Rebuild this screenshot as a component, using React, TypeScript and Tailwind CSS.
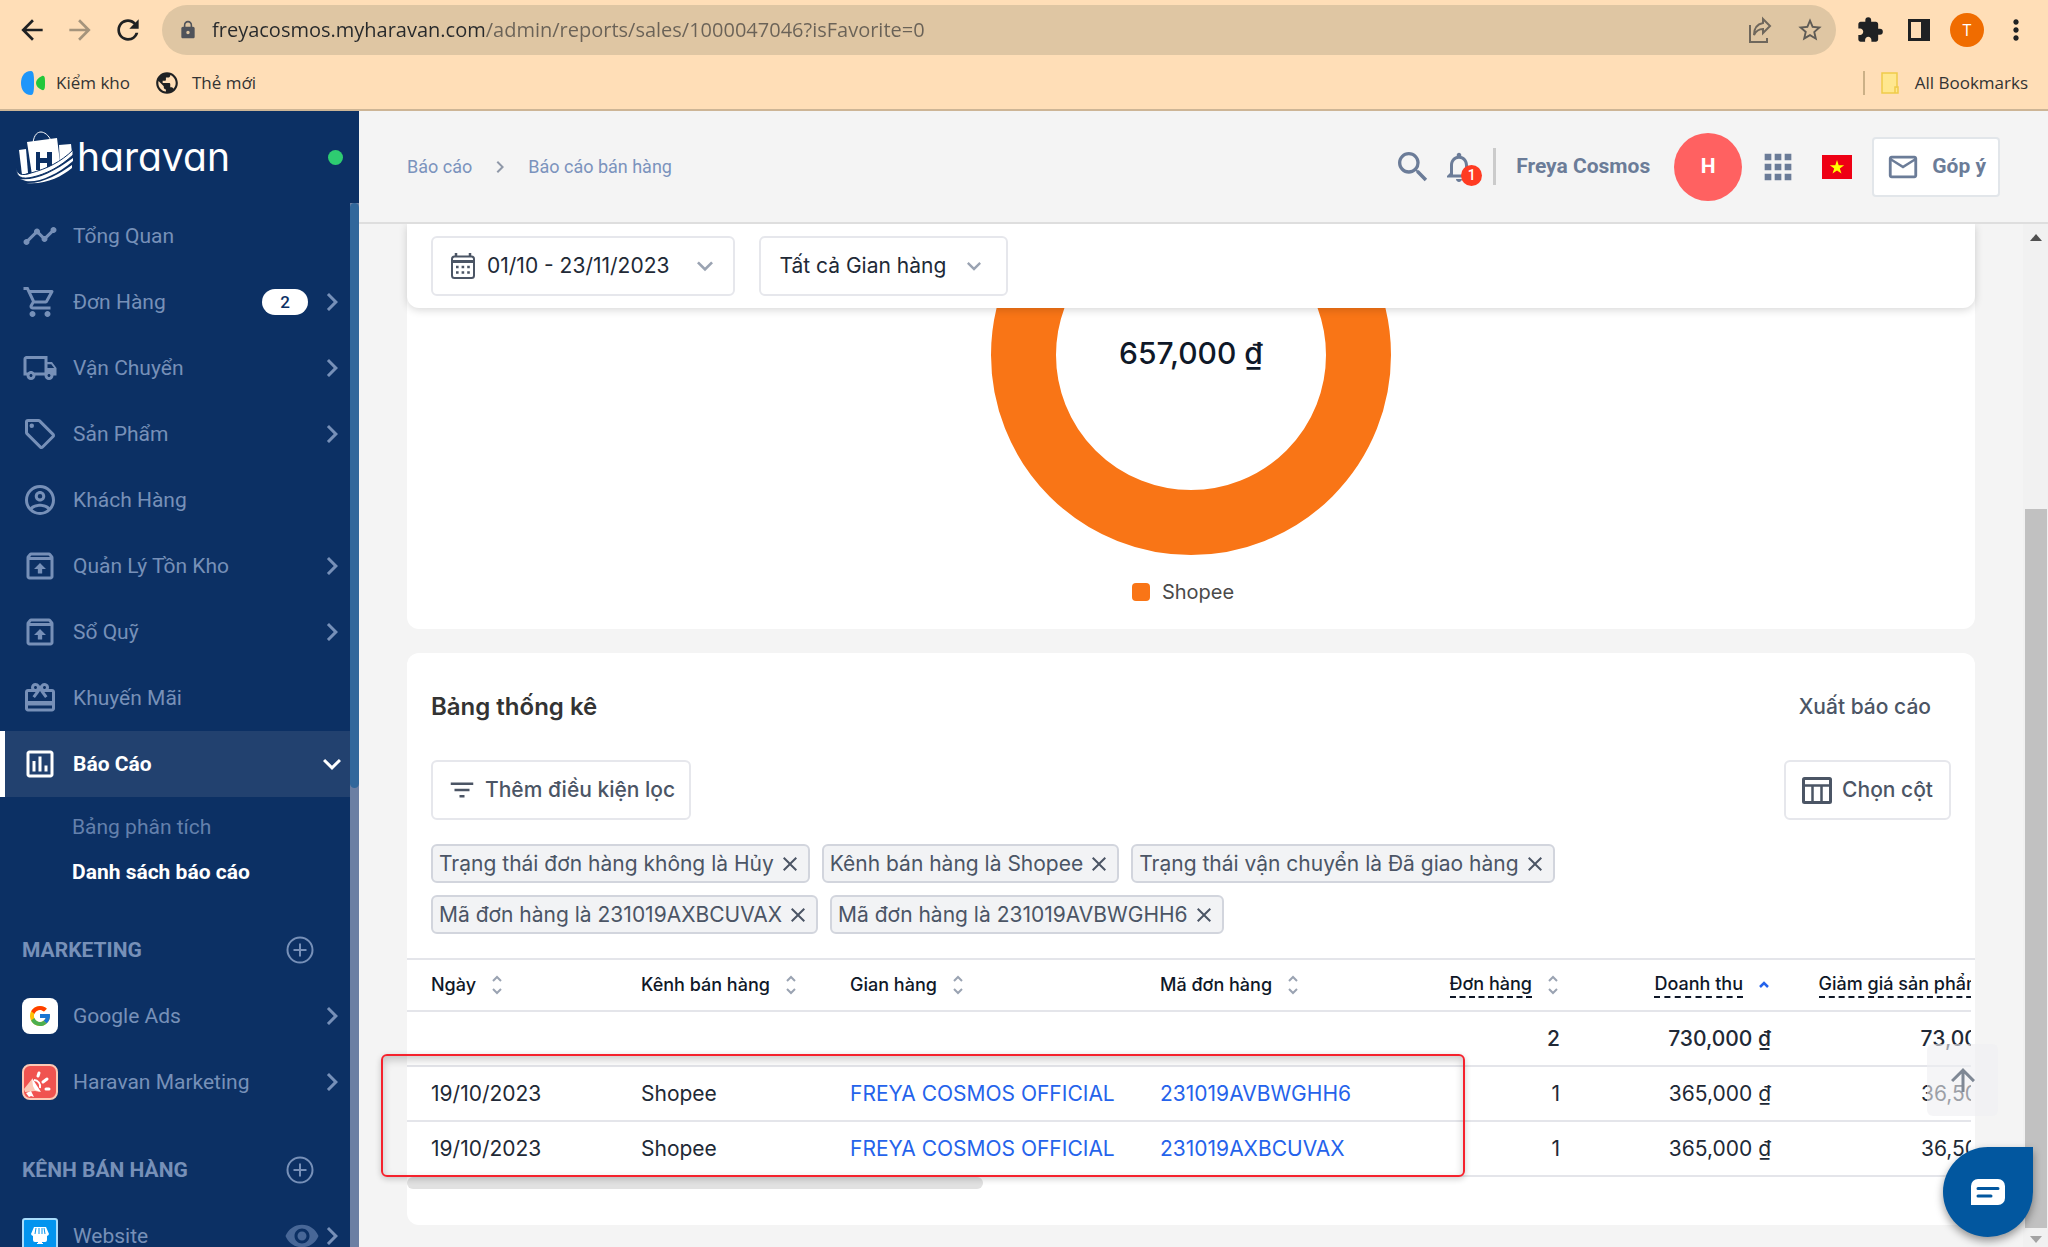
import React, { useState } from 'react';
import {
  MdApps,
  MdArrowBack,
  MdArrowForward,
  MdArrowUpward,
  MdCardGiftcard,
  MdChevronRight,
  MdClose,
  MdExpandMore,
  MdExtension,
  MdFilterList,
  MdLock,
  MdMailOutline,
  MdMoreVert,
  MdNotificationsNone,
  MdOutlineAssessment,
  MdOutlineLocalShipping,
  MdOutlineShoppingCart,
  MdOutlineUnarchive,
  MdPublic,
  MdRefresh,
  MdSearch,
  MdStarBorder,
  MdTimeline,
  MdVisibility,
} from 'react-icons/md';
import { FcGoogle } from 'react-icons/fc';

const TagIcon = ({ className }: { className?: string }) => (
  <svg viewBox="0 0 24 24" fill="currentColor" className={className}>
    <path d="M21.41 11.58L12.41 2.58A2 2 0 0 0 11 2H4A2 2 0 0 0 2 4V11A2 2 0 0 0 2.59 12.42L11.59 21.42A2 2 0 0 0 13 22A2 2 0 0 0 14.41 21.41L21.41 14.41A2 2 0 0 0 22 13A2 2 0 0 0 21.41 11.58M13 20L4 11V4H11L20 13M6.5 5A1.5 1.5 0 1 1 5 6.5A1.5 1.5 0 0 1 6.5 5Z" />
  </svg>
);

const AccountIcon = ({ className }: { className?: string }) => (
  <svg viewBox="0 0 24 24" fill="currentColor" className={className}>
    <path d="M12,2A10,10 0 0,0 2,12A10,10 0 0,0 12,22A10,10 0 0,0 22,12A10,10 0 0,0 12,2M7.07,18.28C7.5,17.38 10.12,16.5 12,16.5C13.88,16.5 16.5,17.38 16.93,18.28C15.57,19.36 13.86,20 12,20C10.14,20 8.43,19.36 7.07,18.28M18.36,16.83C16.93,15.09 13.46,14.5 12,14.5C10.54,14.5 7.07,15.09 5.64,16.83C4.62,15.5 4,13.82 4,12C4,7.59 7.59,4 12,4C16.41,4 20,7.59 20,12C20,13.82 19.38,15.5 18.36,16.83M12,6C10.06,6 8.5,7.56 8.5,9.5C8.5,11.44 10.06,13 12,13C13.94,13 15.5,11.44 15.5,9.5C15.5,7.56 13.94,6 12,6M12,11A1.5,1.5 0 0,1 10.5,9.5A1.5,1.5 0 0,1 12,8A1.5,1.5 0 0,1 13.5,9.5A1.5,1.5 0 0,1 12,11Z" />
  </svg>
);

const LogoMark = () => (
  <svg viewBox="0 0 57 53" className="w-[57px] h-[53px]" fill="#fff">
    <path d="M3 19l7-1 2 24-6 2z" />
    <path d="M11 11l30-4 3 24c-8 7-18 11-28 13z" />
    <path d="M43 14l12-1 1 9c-4 5-8 9-12 12z" />
    <path d="M17 12C18 3 22 1 25 1s8 3 10 9" fill="none" stroke="#fff" strokeWidth="1" />
    <path d="M20 21h4v6h7v-6h5v18h-5v-7h-7v7h-4z" fill="#0c3064" />
    <path d="M1 36c-1 8 6 9 14 6C30 38 45 31 57 19v5C44 36 30 43 17 46 6 49-1 46 1 36z" stroke="#0c3064" strokeWidth="1" />
    <path d="M4 48c15 2 34-7 53-21v3C41 44 22 52 10 50z" />
    <path d="M10 52c17 1 33-9 46-18v3C45 46 29 54 10 52z" />
  </svg>
);

const MarketingLogo = () => (
  <svg viewBox="0 0 36 36" className="w-9 h-9">
    <rect x="1" y="1" width="34" height="34" rx="7" fill="#f05350" stroke="#fcc9b6" strokeWidth="2" />
    <path d="M2 25l8-10 8 13-5-1-10 1z" fill="#fcc9b6" />
    <path d="M10 14l9 14-6-2-2-4z" fill="#fff" />
    <path d="M4 29l5-2 3 6-3-1-2 1z" fill="#fff" />
    <path d="M12 16c4 0 7 4 6 8" fill="none" stroke="#fff" strokeWidth="2" />
    <path d="M16 12l1-3M21 18l4-3M24 25l3 0" stroke="#fff" strokeWidth="3" strokeLinecap="round" />
  </svg>
);

const WebsiteLogo = () => (
  <svg viewBox="0 0 36 36" className="w-9 h-9">
    <rect x="1" y="1" width="34" height="34" rx="2" fill="#0294ef" stroke="#a8dcfb" strokeWidth="2" />
    <path d="M12 9h12l3 7a2.5 2.5 0 0 1-2 2v4a2 2 0 0 1-2 2h-3v1h1v1h-6v-1h1v-1h-3a2 2 0 0 1-2-2v-4a2.5 2.5 0 0 1-2-2z" fill="#fff" />
    <path d="M14 10l-1 6M17 10v6M20 10v6M22 10l1 6" stroke="#0294ef" strokeWidth="1" />
  </svg>
);

const AddCircle = () => (
  <svg viewBox="0 0 28 28" className="w-7 h-7" fill="none" stroke="currentColor" strokeWidth="2">
    <circle cx="14" cy="14" r="12.5" />
    <path d="M14 7.5v13M7.5 14h13" />
  </svg>
);

const CalendarIcon = () => (
  <svg viewBox="0 0 24 26" className="w-6 h-[26px]">
    <path d="M5 0v4M19 0v4" stroke="#4b5565" strokeWidth="2.5" />
    <rect x="1" y="3.5" width="22" height="21.5" rx="2.5" fill="none" stroke="#4b5565" strokeWidth="2" />
    <path d="M1 8.5h22" stroke="#4b5565" strokeWidth="3" />
    <path d="M5 14h14M5 19.5h14" stroke="#4b5565" strokeWidth="2.5" strokeDasharray="2.6 3" />
  </svg>
);

const ColumnsIcon = () => (
  <svg viewBox="0 0 30 27" className="w-[30px] h-[27px]" fill="none" stroke="#4b5565">
    <rect x="1.5" y="1.5" width="27" height="24" rx="1" strokeWidth="3" />
    <path d="M2 8.5h26M10.5 9v17M19.5 9v17" strokeWidth="2.5" />
  </svg>
);

const SortIcon = () => (
  <svg viewBox="0 0 10 20" className="w-[10px] h-5" fill="none" stroke="#9aa3b2" strokeWidth="2">
    <path d="M1 6l4-4 4 4M1 14l4 4 4-4" />
  </svg>
);

const SortUpIcon = () => (
  <svg viewBox="0 0 10 20" className="w-[10px] h-5" fill="none" stroke="#2563eb" strokeWidth="2.5">
    <path d="M1 12l4-4 4 4" />
  </svg>
);

const navItems = [
  { label: 'Tổng Quan', icon: MdTimeline },
  { label: 'Đơn Hàng', icon: MdOutlineShoppingCart, badge: 2, arrow: true },
  { label: 'Vận Chuyển', icon: MdOutlineLocalShipping, arrow: true },
  { label: 'Sản Phẩm', icon: TagIcon, arrow: true },
  { label: 'Khách Hàng', icon: AccountIcon },
  { label: 'Quản Lý Tồn Kho', icon: MdOutlineUnarchive, arrow: true },
  { label: 'Sổ Quỹ', icon: MdOutlineUnarchive, arrow: true },
  { label: 'Khuyến Mãi', icon: MdCardGiftcard },
];

const initialFilters = [
  'Trạng thái đơn hàng không là Hủy',
  'Kênh bán hàng là Shopee',
  'Trạng thái vận chuyển là Đã giao hàng',
  'Mã đơn hàng là 231019AXBCUVAX',
  'Mã đơn hàng là 231019AVBWGHH6',
];

const rows = [
  { date: '19/10/2023', channel: 'Shopee', store: 'FREYA COSMOS OFFICIAL', code: '231019AVBWGHH6', orders: '1', revenue: '365,000 ₫', discount: '36,500 ₫' },
  { date: '19/10/2023', channel: 'Shopee', store: 'FREYA COSMOS OFFICIAL', code: '231019AXBCUVAX', orders: '1', revenue: '365,000 ₫', discount: '36,500 ₫' },
];

const textColumns = ['Ngày', 'Kênh bán hàng', 'Gian hàng', 'Mã đơn hàng'];
const numberColumns = ['Đơn hàng', 'Doanh thu', 'Giảm giá sản phẩm'];

const BrowserBar = () => (
  <div className="shrink-0 h-[111px] bg-[#ffdeb7] border-b-2 border-[#cdb596] text-[#1f2123] font-['Open_Sans',sans-serif]">
    <div className="flex items-center pt-[5px] px-4">
      <div className="flex gap-4 mr-[18px]">
        <button aria-label="Back"><MdArrowBack className="w-8 h-8" /></button>
        <button aria-label="Forward"><MdArrowForward className="w-8 h-8 text-[#a5947c]" /></button>
        <button aria-label="Reload"><MdRefresh className="w-8 h-8" /></button>
      </div>
      <div className="flex-1 h-[50px] rounded-full bg-[#dfc6a3] flex items-center pl-4 pr-3">
        <MdLock className="w-5 h-5 mr-3.5 text-[#50535a]" />
        <input
          aria-label="Address"
          defaultValue="freyacosmos.myharavan.com/admin/reports/sales/1000047046?isFavorite=0"
          className="flex-1 text-xl leading-8 outline-none text-transparent bg-clip-text bg-[linear-gradient(to_right,#27292b_273px,#6a6257_273px)]"
        />
        <button aria-label="Share" className="mr-6">
          <svg viewBox="0 0 24 28" className="w-6 h-7 text-[#6f675c]" fill="none" stroke="currentColor" strokeWidth="2">
            <path d="M2 9v17h17v-4" />
            <path d="M15 3l7 7-7 7v-4c-4 0-7 2-9 6 0-7 4-11 9-12z" />
          </svg>
        </button>
        <button aria-label="Bookmark"><MdStarBorder className="w-7 h-7 text-[#5f5b55]" /></button>
      </div>
      <div className="flex items-center gap-4 ml-5">
        <MdExtension className="w-7 h-7 mr-2" />
        <svg viewBox="0 0 22 22" className="w-[22px] h-[22px] mr-1">
          <path d="M1.5 1.5h19v19h-19z" fill="none" stroke="#1f2123" strokeWidth="3" />
          <path d="M13 1h8v20h-8z" fill="#1f2123" />
        </svg>
        <button aria-label="Profile" className="w-[34px] h-[34px] rounded-full bg-[#f06c00] text-white text-base">T</button>
        <button aria-label="Menu"><MdMoreVert className="w-8 h-8" /></button>
      </div>
    </div>
    <div className="flex items-center h-14 px-5 text-[17px] text-[#333]">
      <svg viewBox="0 0 26 26" className="w-[26px] h-[26px] mr-2.5">
        <path d="M11 1c3 0 3 6 3 12s0 12-3 12C4 25 1 19 1 13S4 1 11 1z" fill="#1e96fa" />
        <path d="M22 6c3-1 3 3 3 7s0 8-3 7c-4-2-6-4-6-7s2-5 6-7z" fill="#22c73a" />
      </svg>
      <a href="#">Kiểm kho</a>
      <MdPublic className="w-[26px] h-[26px] ml-6 mr-3 text-[#1f2123]" />
      <a href="#">Thẻ mới</a>
      <div className="ml-auto flex items-center">
        <div className="w-0.5 h-6 bg-[#cbb087] mr-4" />
        <svg viewBox="0 0 18 22" className="w-[18px] h-[22px] mr-4">
          <path d="M1 1h15v14h1v6H1z" fill="#ffe78f" stroke="#f0cb4b" strokeWidth="1.5" />
          <path d="M14 21v-6h2" fill="none" stroke="#f0cb4b" strokeWidth="1.5" />
        </svg>
        <a href="#">All Bookmarks</a>
      </div>
    </div>
  </div>
);

const SectionTitle = ({ title }: { title: string }) => (
  <div className="h-[66px] mt-[22px] flex items-center justify-between pl-[22px] pr-9 font-bold">
    {title}
    <button aria-label={`Thêm ${title}`}><AddCircle /></button>
  </div>
);

const Sidebar = () => (
  <aside className="w-[359px] shrink-0 bg-[#0c3064] text-[#7790b8] text-[21px] leading-7 font-['Roboto',sans-serif] flex flex-col overflow-hidden">
    <div className="h-[92px] shrink-0 flex items-center px-4">
      <LogoMark />
      <span className="ml-1 text-[39px] leading-[44px] text-white font-['Inter',sans-serif] [font-feature-settings:'cv11']">haravan</span>
      <span className="ml-auto w-[15px] h-[15px] rounded-full bg-[#2ecc71]" />
    </div>
    <div className="flex flex-1 min-h-0">
      <nav className="flex-1 overflow-hidden">
        {navItems.map(({ label, icon: Icon, badge, arrow }) => (
          <a key={label} href="#" className="h-[66px] flex items-center pl-[22px]">
            <Icon className="w-9 h-9 mr-[15px]" />
            {label}
            <span className="ml-auto flex items-center">
              {badge && (
                <span className="w-[46px] h-[26px] mr-1.5 rounded-full bg-white text-[#0c3064] text-[17px] leading-[26px] font-medium text-center">
                  {badge}
                </span>
              )}
              {arrow && <MdChevronRight className="w-9 h-9" />}
            </span>
          </a>
        ))}
        <a href="#" className="h-[66px] flex items-center pl-[17px] border-l-[5px] border-white bg-[#22416f] text-white font-bold">
          <MdOutlineAssessment className="w-9 h-9 mr-[15px]" />
          Báo Cáo
          <MdExpandMore className="w-9 h-9 ml-auto" />
        </a>
        <div className="py-2 pl-[72px]">
          <a href="#" className="block leading-[45px] text-[#6480ac]">Bảng phân tích</a>
          <a href="#" className="block leading-[45px] text-white font-bold">Danh sách báo cáo</a>
        </div>
        <div className="-mt-2">
          <SectionTitle title="MARKETING" />
          <a href="#" className="h-[66px] flex items-center pl-[22px]">
            <span className="w-9 h-9 mr-[15px] rounded-lg bg-white flex items-center justify-center">
              <FcGoogle className="w-6 h-6" />
            </span>
            Google Ads
            <MdChevronRight className="w-9 h-9 ml-auto" />
          </a>
          <a href="#" className="h-[66px] flex items-center pl-[22px]">
            <span className="mr-[15px]"><MarketingLogo /></span>
            Haravan Marketing
            <MdChevronRight className="w-9 h-9 ml-auto" />
          </a>
          <SectionTitle title="KÊNH BÁN HÀNG" />
          <a href="#" className="h-[66px] flex items-center pl-[22px]">
            <span className="mr-[15px]"><WebsiteLogo /></span>
            Website
            <MdVisibility className="w-9 h-9 ml-auto -mr-1.5 text-[#486797]" />
            <MdChevronRight className="w-9 h-9" />
          </a>
        </div>
      </nav>
      <div className="w-[9px] bg-[#6b7fa3]">
        <div className="h-[56%] rounded-full bg-[#31679b]" />
      </div>
    </div>
  </aside>
);

const Header = () => (
  <header className="h-[113px] shrink-0 border-b-2 border-[#dedede] flex items-center px-12 text-[#6b7c98] font-['Roboto',sans-serif]">
    <a href="#" className="text-lg text-[#7b93bd]">Báo cáo</a>
    <MdChevronRight className="w-6 h-6 mx-4 text-[#8f98a8]" />
    <a href="#" className="text-lg text-[#7b93bd]">Báo cáo bán hàng</a>
    <div className="ml-auto flex items-center">
      <button aria-label="Tìm kiếm"><MdSearch className="w-10 h-10" /></button>
      <button aria-label="Thông báo" className="relative ml-2">
        <MdNotificationsNone className="w-9 h-9" />
        <span className="absolute left-5 top-4 w-[21px] h-[21px] rounded-full bg-[#ff3b22] text-white text-sm leading-[21px] font-medium">1</span>
      </button>
      <div className="w-[3px] h-[37px] ml-4 mr-5 bg-[#cbcbcb]" />
      <span className="text-[21px] font-bold">Freya Cosmos</span>
      <span className="ml-6 w-[68px] h-[68px] rounded-full bg-[#ff6161] text-white text-[21px] font-bold flex items-center justify-center">H</span>
      <button aria-label="Ứng dụng" className="ml-4"><MdApps className="w-10 h-10" /></button>
      <svg viewBox="0 0 30 24" className="w-[30px] h-6 ml-6 mr-5">
        <path d="M0 0h30v24H0z" fill="#ee0014" />
        <path d="M15 5l1.7 5.2h5.5l-4.4 3.2 1.7 5.2-4.5-3.2-4.5 3.2 1.7-5.2-4.4-3.2h5.5z" fill="#ff0" />
      </svg>
      <button className="h-[60px] px-3 flex items-center bg-white border-2 border-[#e2e6ea] rounded text-[21px] font-bold">
        <MdMailOutline className="w-[34px] h-[34px] mr-3" />
        Góp ý
      </button>
    </div>
  </header>
);

const FilterBar = () => (
  <div className="relative z-10 bg-white rounded-b-xl shadow-[0_2px_8px_rgba(0,0,0,0.16)] flex gap-6 px-6 py-3 text-[21px] text-[#212936]">
    <button className="h-[60px] pl-[18px] pr-3 flex items-center border-2 border-[#e6e7ec] rounded-md">
      <CalendarIcon />
      <span className="ml-3 mr-5">01/10 - 23/11/2023</span>
      <MdExpandMore className="w-8 h-8 text-[#9aa3b2]" />
    </button>
    <div className="relative">
      <select aria-label="Gian hàng" className="h-[60px] w-[249px] pl-[18px] appearance-none bg-white border-2 border-[#e6e7ec] rounded-md">
        <option>Tất cả Gian hàng</option>
      </select>
      <MdExpandMore className="absolute right-5 top-4 w-7 h-7 text-[#9aa3b2] pointer-events-none" />
    </div>
  </div>
);

const ChartCard = () => (
  <section className="-mt-3 pt-3 bg-white rounded-b-xl flex flex-col items-center">
    <svg viewBox="0 153 400 247" className="w-[400px] h-[247px]">
      <circle cx="200" cy="200" r="167.5" fill="none" stroke="#f97516" strokeWidth="65" />
      <text x="200" y="209" textAnchor="middle" fontSize="30" fontWeight="500" fill="#0f1828" fontFamily="Inter, sans-serif">
        657,000 ₫
      </text>
    </svg>
    <div className="h-[74px] flex items-center gap-3 text-[20px] text-[#4a4a4a] pr-4">
      <span className="w-[18px] h-[18px] rounded-sm bg-[#f97516]" />
      Shopee
    </div>
  </section>
);

const StatsTable = () => (
  <div className="relative border-t-2 border-[#e4e5ea]">
    <div className="mr-1 overflow-hidden">
      <table className="table-fixed w-[1613px] text-[21px] leading-7 text-[#212936]">
        <colgroup>
          <col className="w-[210px]" />
          <col className="w-[209px]" />
          <col className="w-[310px]" />
          <col className="w-[254px]" />
          <col className="w-[180px]" />
          <col className="w-[211px]" />
          <col className="w-[239px]" />
        </colgroup>
        <thead>
          <tr className="h-[51px] border-b-2 border-[#e4e5ea] text-lg text-[#0f1828]">
            {textColumns.map(name => (
              <th key={name} className="pl-6 font-medium">
                <button className="flex items-center gap-4 whitespace-nowrap">
                  {name}
                  <SortIcon />
                </button>
              </th>
            ))}
            {numberColumns.map(name => (
              <th key={name} className="pr-3 font-medium">
                <button className="ml-auto flex items-center gap-4 whitespace-nowrap">
                  <span className="leading-6 border-b-2 border-dashed border-[#0f1828]">{name}</span>
                  {name === 'Doanh thu' ? <SortUpIcon /> : <SortIcon />}
                </button>
              </th>
            ))}
          </tr>
        </thead>
        <tbody>
          <tr className="h-[55px] border-b-2 border-[#e4e5ea] font-medium text-right">
            <td colSpan={4} />
            <td className="pr-2.5">2</td>
            <td className="pr-2.5">730,000 ₫</td>
            <td className="pr-2.5">73,000 ₫</td>
          </tr>
          {rows.map(row => (
            <tr key={row.code} className="h-[55px] border-b-2 border-[#e4e5ea]">
              <td className="pl-6">{row.date}</td>
              <td className="pl-6">{row.channel}</td>
              <td className="pl-6 whitespace-nowrap"><a href="#" className="text-[#2563eb]">{row.store}</a></td>
              <td className="pl-6"><a href="#" className="text-[#2563eb]">{row.code}</a></td>
              <td className="pr-2.5 text-right">{row.orders}</td>
              <td className="pr-2.5 text-right">{row.revenue}</td>
              <td className="pr-2.5 text-right">{row.discount}</td>
            </tr>
          ))}
        </tbody>
      </table>
    </div>
    <div className="w-[576px] h-3 rounded-full bg-[#e1e1e1]" />
    {/* highlight around the order rows */}
    <div className="absolute -left-[26px] top-[94px] w-[1084px] h-[123px] rounded-md border-2 border-[#f5222d] shadow-[0_2px_6px_rgba(0,0,0,0.2),inset_0_4px_8px_rgba(0,0,0,0.2)] pointer-events-none" />
  </div>
);

const StatsCard = () => {
  const [filters, setFilters] = useState(initialFilters);

  return (
    <section className="mt-6 bg-white rounded-xl pb-9">
      <div className="px-6 pt-[38px]">
        <div className="flex items-center justify-between h-8">
          <h2 className="text-2xl font-semibold text-[#333]">Bảng thống kê</h2>
          <button className="mr-5 text-[21px] font-medium text-[#4b5565]">Xuất báo cáo</button>
        </div>
        <div className="flex justify-between mt-[37px] text-[21px] font-medium text-[#4b5565]">
          <button className="h-[60px] px-3.5 flex items-center gap-2 border-2 border-[#e6e7ec] rounded-md">
            <MdFilterList className="w-[30px] h-[30px]" />
            Thêm điều kiện lọc
          </button>
          <button className="h-[60px] px-4 flex items-center gap-2.5 border-2 border-[#e6e7ec] rounded-md">
            <ColumnsIcon />
            Chọn cột
          </button>
        </div>
        <div className="flex flex-wrap gap-3 mt-6 mb-6 max-w-[1200px] text-[21px] text-[#4b5565]">
          {filters.map(filter => (
            <span key={filter} className="h-[39px] px-1.5 flex items-center gap-1 rounded-md border-2 border-[#d2d5dd] bg-[#f2f3f5]">
              {filter}
              <button aria-label={`Xóa ${filter}`} onClick={() => setFilters(filters.filter(f => f !== filter))}>
                <MdClose className="w-6 h-6" />
              </button>
            </span>
          ))}
        </div>
      </div>
      <StatsTable />
    </section>
  );
};

const App = () => (
  <div className="h-screen flex flex-col overflow-hidden bg-[#f4f4f4]">
    <BrowserBar />
    <div className="flex flex-1 min-h-0">
      <Sidebar />
      <div className="flex-1 min-w-0 flex flex-col">
        <Header />
        <div className="flex flex-1 min-h-0">
          <main className="flex-1 min-w-0 px-12 overflow-hidden font-['Inter',sans-serif]">
            <FilterBar />
            <ChartCard />
            <StatsCard />
          </main>
          <div className="w-[25px] flex flex-col items-center bg-[#f1f1f1]">
            <div className="mt-2.5 border-x-[6px] border-x-transparent border-b-[7px] border-b-[#505050]" />
            <div className="flex-[268]" />
            <div className="flex-[719] w-[22px] bg-[#c1c1c1]" />
            <div className="mt-2 mb-1 border-x-[6px] border-x-transparent border-t-[7px] border-t-[#a3a3a3]" />
          </div>
        </div>
      </div>
    </div>
    <button aria-label="Lên đầu trang" className="fixed right-[50px] bottom-[131px] w-[71px] h-[72px] rounded-md bg-[#eeeff2]/60 flex items-center justify-center text-[#7f8895]">
      <MdArrowUpward className="w-9 h-9" />
    </button>
    <button aria-label="Chat" className="fixed right-[15px] bottom-[10px] w-[90px] h-[90px] rounded-full rounded-tr-xl bg-[#02579f] shadow-[0_4px_8px_rgba(0,0,0,0.4)] flex items-center justify-center">
      <svg viewBox="0 0 34 26" className="w-[34px] h-[26px]">
        <path d="M7 0h20a7 7 0 0 1 7 7v12a7 7 0 0 1-7 7H0V7a7 7 0 0 1 7-7z" fill="#fff" />
        <path d="M7 9.5h20M7 17h13" stroke="#02579f" strokeWidth="3" strokeLinecap="round" />
      </svg>
    </button>
  </div>
);

export default App;
